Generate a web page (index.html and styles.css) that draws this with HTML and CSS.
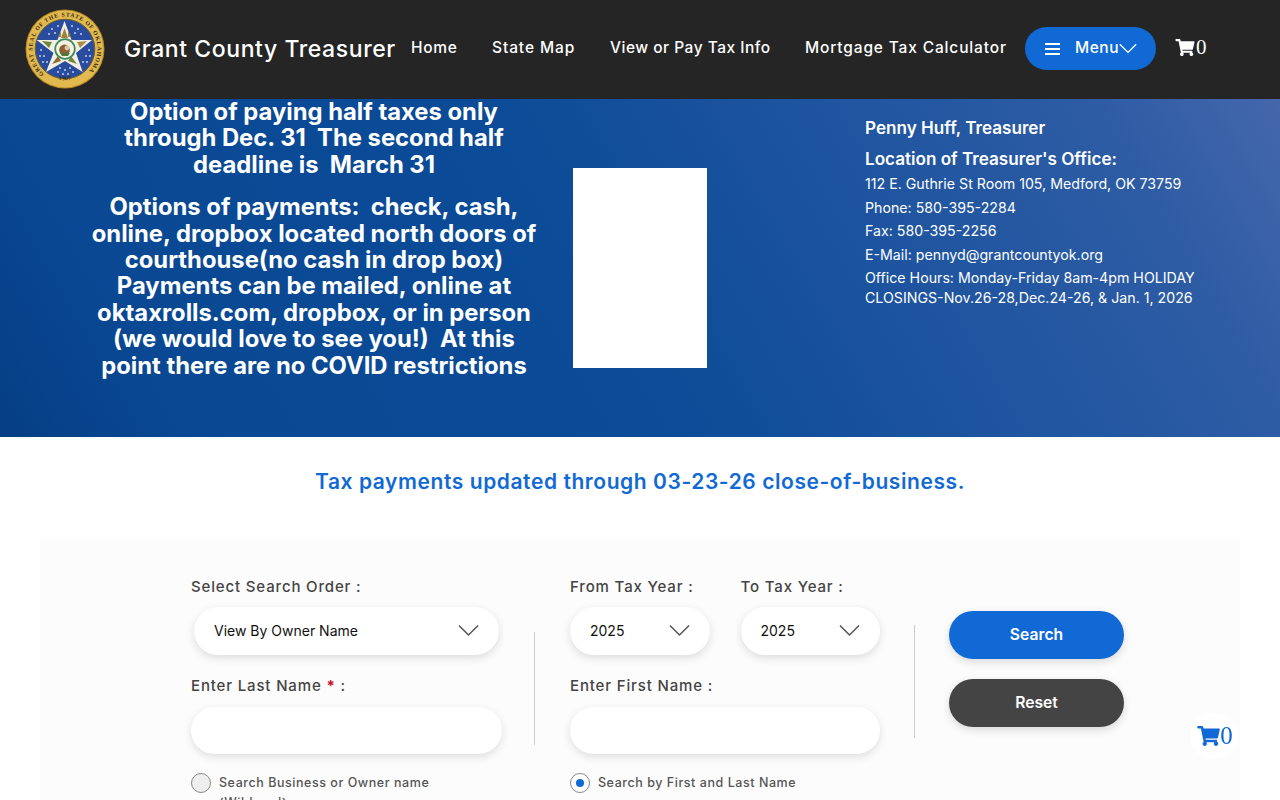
FILE: index.html
```html
<!DOCTYPE html>
<html lang="en">
<head>
<meta charset="utf-8">
<title>Grant County Treasurer</title>
<link rel="stylesheet" href="styles.css">
</head>
<body>
<svg class="defs" width="0" height="0" aria-hidden="true">
  <symbol id="cart" viewBox="0 0 576 512"><path fill="currentColor" d="M528.12 301.319l47.273-208C578.806 78.301 567.391 64 551.99 64H159.208l-9.166-44.81C147.758 8.021 137.93 0 126.529 0H24C10.745 0 0 10.745 0 24v16c0 13.255 10.745 24 24 24h69.883l70.248 343.435C147.325 417.1 136 435.222 136 456c0 30.928 25.072 56 56 56s56-25.072 56-56c0-15.674-6.447-29.835-16.824-40h209.647C430.447 426.165 424 440.326 424 456c0 30.928 25.072 56 56 56s56-25.072 56-56c0-22.172-12.888-41.332-31.579-50.405l5.517-24.276c3.413-15.018-8.002-29.319-23.403-29.319H218.117l-6.545-32h293.145c11.206 0 20.92-7.754 23.403-18.681z"/></symbol>
  <symbol id="chev" viewBox="0 0 22 13"><path fill="none" stroke="currentColor" stroke-width="1.6" d="M1 1.2 11 11.2 21 1.2"/></symbol>
</svg>

<header class="topbar">
  <svg class="seal" viewBox="0 0 80 80" role="img" aria-label="Great Seal of the State of Oklahoma">
    <defs>
      <path id="sealarc" d="M19.1 64.9A32.5 32.5 0 1 1 60.9 64.9"/>
      <path id="sealbottom" d="M16 62A35.5 35.5 0 0 0 64 62"/>
    </defs>
    <circle cx="40" cy="40" r="39.5" fill="#b98a28"/>
    <circle cx="40" cy="40" r="38.4" fill="#e2b94e"/>
    <circle cx="40" cy="40" r="29.8" fill="#2a4c9e" stroke="#6f5f28" stroke-width="1"/>
    <text class="sealtext"><textPath href="#sealarc" textLength="154" lengthAdjust="spacing">GREAT SEAL OF THE STATE OF OKLAHOMA</textPath></text>
    <text class="sealyear"><textPath href="#sealbottom" startOffset="50%">1907</textPath></text>
    <g fill="#cfe0f2">
      <circle cx="27" cy="20" r=".9"/><circle cx="33" cy="17" r=".9"/><circle cx="47" cy="17" r=".9"/><circle cx="53" cy="20" r=".9"/><circle cx="30" cy="24" r=".9"/><circle cx="50" cy="24" r=".9"/><circle cx="24" cy="25" r=".9"/><circle cx="56" cy="25" r=".9"/>
      <circle cx="16" cy="41" r=".9"/><circle cx="19" cy="47" r=".9"/><circle cx="15" cy="47" r=".9"/><circle cx="22" cy="53" r=".9"/><circle cx="18" cy="53" r=".9"/><circle cx="64" cy="41" r=".9"/><circle cx="61" cy="47" r=".9"/><circle cx="65" cy="47" r=".9"/><circle cx="58" cy="53" r=".9"/><circle cx="62" cy="53" r=".9"/>
      <circle cx="33" cy="63" r=".9"/><circle cx="38" cy="65" r=".9"/><circle cx="43" cy="65" r=".9"/><circle cx="48" cy="63" r=".9"/><circle cx="40" cy="61" r=".9"/><circle cx="35" cy="59" r=".9"/><circle cx="45" cy="59" r=".9"/>
    </g>
    <path fill="#f3efe3" d="M39.5 12 46.5 31 67 31 51 44 57.7 63 40 52 21 63 28.5 44 11.7 31 32.5 31Z"/>
    <path fill="#9a8440" d="M39.5 19 43 29H36ZM36 22l-3 6h3ZM43 22l3 6h-3Z"/>
    <path fill="#6d8a3c" d="M17 32 27 33 24 39Z"/>
    <path fill="#a78d4c" d="M62 32 52 33 55 39Z"/>
    <path fill="#8f6a3a" d="M27 55 33 47 36 52Z"/>
    <path fill="#6d8a3c" d="M52 55 46 47 43 52Z"/>
    <circle cx="40" cy="40" r="9.8" fill="#f6f2e6" stroke="#3d8a5a" stroke-width="1.7"/>
    <circle cx="39.5" cy="41" r="5.4" fill="#8a6236"/>
    <circle cx="42" cy="39" r="2.4" fill="#d9c9a6"/>
    <path fill="#4f7a3a" d="M35 44h10l-2 3h-6Z"/>
  </svg>
  <div class="brand">Grant County Treasurer</div>
  <nav class="nav">
    <a href="#">Home</a>
    <a class="nav-map" href="#">State Map</a>
    <a class="nav-view" href="#">View or Pay Tax Info</a>
    <a class="nav-long" href="#">Mortgage Tax Calculator</a>
  </nav>
  <button class="menu-btn" type="button">
    <span class="burger"><i></i><i></i><i></i></span>
    <span class="menu-label">Menu</span>
    <svg class="menu-chev"><use href="#chev"/></svg>
  </button>
  <div class="top-cart"><svg class="top-cart-icon"><use href="#cart"/></svg><span>0</span></div>
</header>

<section class="hero">
  <div class="notice">
    <p>Option of paying half taxes only<br>through Dec. 31&nbsp; The second half<br>deadline is&nbsp; March 31</p>
    <p>Options of payments:&nbsp; check, cash,<br>online, dropbox located north doors of<br>courthouse(no cash in drop box)<br>Payments can be mailed, online at<br>oktaxrolls.com, dropbox, or in person<br>(we would love to see you!)&nbsp; At this<br>point there are no COVID restrictions</p>
  </div>
  <div class="portrait"></div>
  <div class="contact">
    <h2>Penny Huff, Treasurer</h2>
    <h3>Location of Treasurer's Office:</h3>
    <p>112 E. Guthrie St Room 105, Medford, OK 73759</p>
    <p>Phone: 580-395-2284</p>
    <p>Fax: 580-395-2256</p>
    <p>E-Mail: pennyd@grantcountyok.org</p>
    <p class="hours">Office Hours: Monday-Friday 8am-4pm HOLIDAY CLOSINGS-Nov.26-28,Dec.24-26, &amp; Jan. 1, 2026</p>
  </div>
</section>

<h1 class="updated">Tax payments updated through 03-23-26 close-of-business.</h1>

<main class="panel">
  <div class="col col-a">
    <label class="field-label">Select Search Order :</label>
    <div class="select select-wide"><span>View By Owner Name</span><svg class="chev"><use href="#chev"/></svg></div>
    <label class="field-label second">Enter Last Name <b>*</b> :</label>
    <div class="input"></div>
    <div class="radio-row">
      <span class="radio"></span>
      <span class="radio-text">Search Business or Owner name (Wildcard)</span>
    </div>
  </div>
  <div class="divider divider-a"></div>
  <div class="col col-b">
    <div class="years">
      <div class="year">
        <label class="field-label">From Tax Year :</label>
        <div class="select"><span>2025</span><svg class="chev"><use href="#chev"/></svg></div>
      </div>
      <div class="year">
        <label class="field-label">To Tax Year :</label>
        <div class="select"><span>2025</span><svg class="chev"><use href="#chev"/></svg></div>
      </div>
    </div>
    <label class="field-label second">Enter First Name :</label>
    <div class="input"></div>
    <div class="radio-row">
      <span class="radio checked"></span>
      <span class="radio-text">Search by First and Last Name</span>
    </div>
  </div>
  <div class="divider divider-b"></div>
  <div class="actions">
    <button class="btn btn-search" type="button">Search</button>
    <button class="btn btn-reset" type="button">Reset</button>
  </div>
</main>

<div class="float-cart"><svg class="float-cart-icon"><use href="#cart"/></svg><span>0</span></div>
</body>
</html>
```
FILE: styles.css
```css
* { box-sizing: border-box; }
html, body { margin: 0; padding: 0; background: #fff; }
html { height: 800px; overflow: hidden; }
body { font-family: Inter, "Noto Sans", "Liberation Sans", sans-serif; color: #444; }
.defs { position: absolute; }
p, h1, h2, h3 { margin: 0; }

.topbar { height: 99px; background: #252525; display: flex; align-items: center; padding-left: 25px; color: #fff; }
.seal { width: 80px; height: 80px; flex: none; margin-top: -1px; }
.sealtext { font: 700 5.9px "Liberation Serif", serif; fill: #35280e; }
.sealyear { font: 700 5.6px "Liberation Serif", serif; fill: #35280e; text-anchor: middle; letter-spacing: .3px; }
.brand { margin-left: 19px; width: 287px; font-size: 23px; font-weight: 500; letter-spacing: .58px; white-space: nowrap; margin-top: -2px; }
.nav { display: grid; grid-template-columns: 81px 118px 195px 220px; margin-top: -5px; }
.nav a { color: #fff; text-decoration: none; font-size: 15.5px; font-weight: 500; letter-spacing: .7px; white-space: nowrap; }
.nav .nav-map { letter-spacing: .9px; }
.nav .nav-view { letter-spacing: .5px; }
.nav .nav-long { letter-spacing: .85px; }
.menu-btn { width: 131px; height: 43px; border: 0; border-radius: 22px; background: #1169d6; color: #fff; display: flex; align-items: center; padding: 0 0 0 20px; font: 500 15.5px Inter, sans-serif; margin-top: -3px; }
.burger { width: 15px; display: flex; flex-direction: column; gap: 3px; margin-top: 2px; }
.burger i { display: block; height: 2px; background: #fff; }
.menu-label { margin: -2px 0 0 15px; letter-spacing: .55px; }
.menu-chev { width: 18px; height: 11px; }
.top-cart { margin-left: 19px; display: flex; align-items: center; margin-top: -5px; font: 21px "Liberation Serif", serif; }
.top-cart-icon { width: 20px; height: 17px; }
.top-cart-icon + span { margin-left: 1px; }

.hero { height: 338px; background: linear-gradient(60deg, #053e84 0%, #0a4893 13%, #0b4b97 45%, #2055a0 70%, #2d5ca4 87%, #4567ab 100%); color: #fff; display: flex; }
.notice { width: 628px; flex: none; text-align: center; font-size: 23.8px; font-weight: 700; line-height: 26.4px; white-space: nowrap; }
.notice p + p { margin-top: 16px; }
.portrait { width: 134px; height: 200px; background: #fff; margin: 69px 0 0 -55px; flex: none; }
.contact { margin-left: 158px; padding-top: 18px; width: 360px; font-size: 14.2px; line-height: 20px; }
.contact h2 { font-size: 17.1px; font-weight: 600; line-height: 22px; }
.contact h3 { font-size: 17.1px; font-weight: 600; line-height: 22px; margin-top: 9px; margin-bottom: 4px; }
.contact p { margin-bottom: 3.5px; }

.updated { margin: 32px 0 0; text-align: center; color: #1169d6; font-size: 21px; font-weight: 600; line-height: 26px; letter-spacing: .57px; }

.panel { margin: 43px 40px 0; background: #fcfcfc; height: 340px; padding: 39px 0 0 151px; display: flex; align-items: flex-start; }
.col { flex: none; }
.col-a { width: 311px; }
.col-b { width: 310px; }
.field-label { display: block; font-size: 15px; line-height: 20px; font-weight: 500; letter-spacing: .85px; color: #444; white-space: nowrap; }
.field-label b { color: #c8102e; font-weight: 700; }
.field-label.second { margin-top: 21px; }
.select { margin-top: 10px; height: 48px; border-radius: 24px; background: #fff; box-shadow: 0 3px 8px rgba(0,0,0,.13); display: flex; align-items: center; justify-content: space-between; padding: 0 20px 2px; font-size: 14px; color: #111; }
.select-wide { margin-left: 3px; margin-right: 3px; }
.chev { width: 21px; height: 13px; color: #555; flex: none; }
.input { margin-top: 11px; height: 47px; border-radius: 24px; background: #fff; box-shadow: 0 3px 8px rgba(0,0,0,.12); }
.years { display: flex; gap: 31px; }
.year { width: 139.5px; }
.radio-row { display: flex; margin-top: 19px; gap: 8px; }
.radio { width: 20px; height: 20px; flex: none; border-radius: 50%; border: 1px solid #888; background: #eee; position: relative; }
.radio.checked { background: #fff; }
.radio.checked::after { content: ""; position: absolute; left: 5px; top: 5px; width: 8px; height: 8px; border-radius: 50%; background: #1169d6; }
.radio-text { font-size: 12.5px; line-height: 20px; font-weight: 500; letter-spacing: .55px; color: #555; width: 240px; }
.divider { width: 1px; flex: none; background: #ccc; height: 113px; }
.divider-a { margin: 55px 35px 0 32px; }
.divider-b { margin: 48px 34px 0 34px; }
.actions { margin-top: 34px; display: flex; flex-direction: column; gap: 20px; }
.btn { width: 175px; height: 48px; border: 0; border-radius: 24px; padding: 0 0 2px; color: #fff; font: 600 15.7px Inter, sans-serif; box-shadow: 0 3px 8px rgba(0,0,0,.14); }
.btn-search { background: #1169d6; }
.btn-reset { background: #444; }

.float-cart { position: fixed; left: 1190px; top: 713px; width: 48px; height: 46px; padding-left: 2px; border-radius: 50%; background: #fff; color: #1169d6; display: flex; align-items: center; justify-content: center; font: 25px "Liberation Serif", serif; }
.float-cart-icon { width: 23px; height: 20px; }
```
